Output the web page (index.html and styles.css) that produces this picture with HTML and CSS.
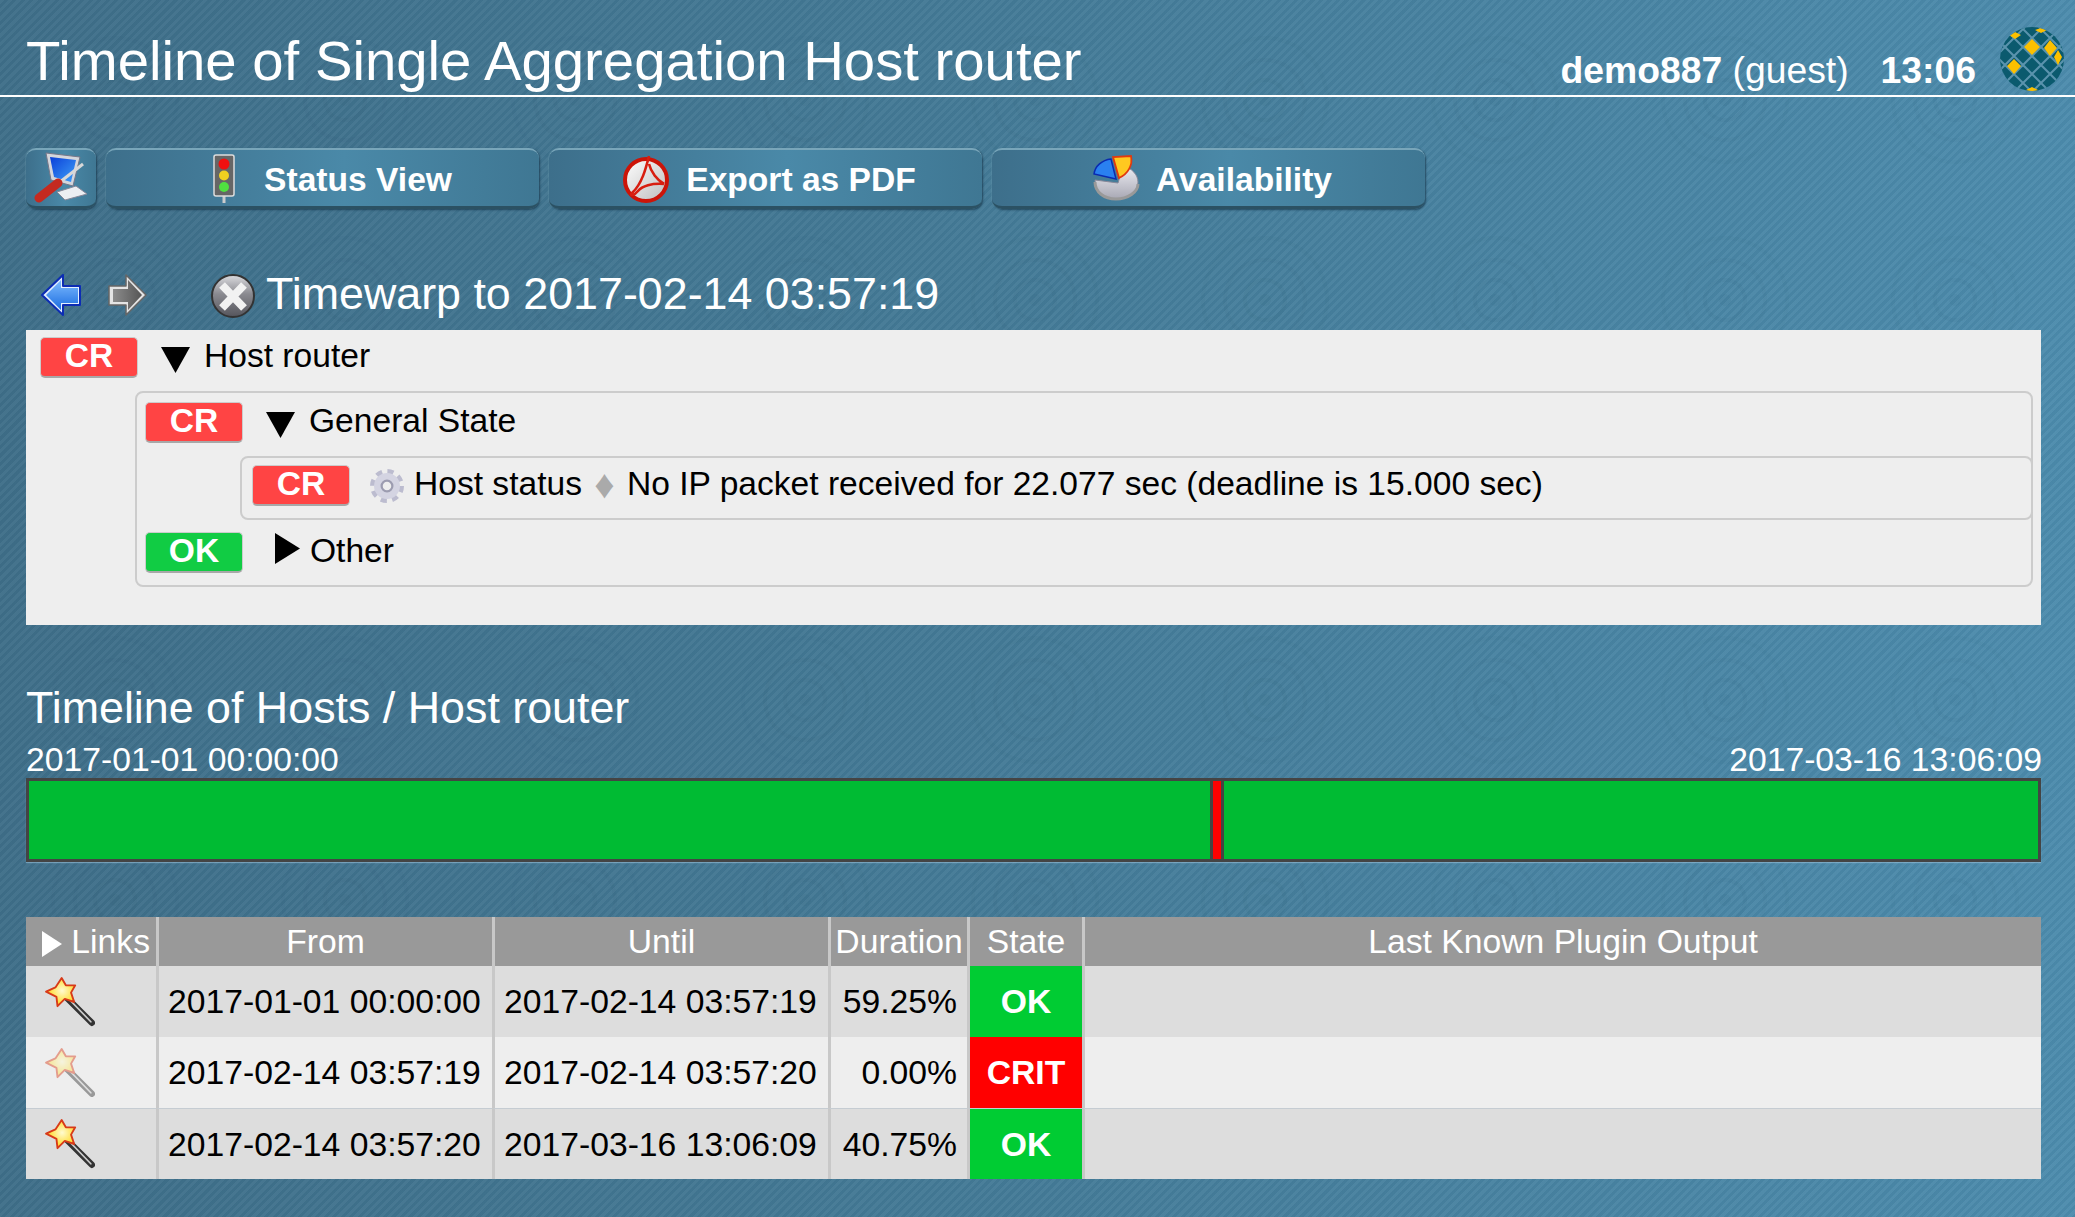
FILE: index.html
```html
<!DOCTYPE html>
<html lang="en">
<head>
    <meta charset="UTF-8">
    <title>Timeline of Single Aggregation Host router</title>
    <link rel="stylesheet" href="styles.css">
</head>
<body>
    <svg class="defs" aria-hidden="true">
        <defs>
            <linearGradient id="blueArrow" x1="0" y1="0" x2="0" y2="1"><stop offset="0" stop-color="#7fbcff"/><stop offset="1" stop-color="#1a6ce0"/></linearGradient>
            <linearGradient id="greyArrow" x1="0" y1="0" x2="1" y2="0"><stop offset="0" stop-color="#8c8c8c"/><stop offset="1" stop-color="#555"/></linearGradient>
            <linearGradient id="closeDisc" x1="0" y1="0" x2="0" y2="1"><stop offset="0" stop-color="#dcdce0"/><stop offset=".45" stop-color="#8a8a90"/><stop offset="1" stop-color="#55555c"/></linearGradient>
            <linearGradient id="screen" x1="0" y1="0" x2="1" y2="1"><stop offset="0" stop-color="#0a3fd8"/><stop offset="1" stop-color="#3fa0f8"/></linearGradient>
            <linearGradient id="pdfDisc" x1="0" y1="0" x2="1" y2="1"><stop offset="0" stop-color="#fff"/><stop offset="1" stop-color="#bdbdbd"/></linearGradient>
            <linearGradient id="pieBody" x1="0" y1="0" x2="0" y2="1"><stop offset="0" stop-color="#eeeef4"/><stop offset="1" stop-color="#a8a8b4"/></linearGradient>
            <radialGradient id="starFill" cx=".55" cy=".45" r=".65"><stop offset="0" stop-color="#fffbd0"/><stop offset=".65" stop-color="#ffdf40"/><stop offset="1" stop-color="#f8b010"/></radialGradient>
            <symbol id="wand" viewBox="0 0 48 48">
                <path d="M18 17 45 44" stroke="#333" stroke-width="6" stroke-linecap="round"/>
                <path d="M18 16 44 43" stroke="#ccc" stroke-width="1.6" stroke-linecap="round"/>
                <path d="M16 1 20 8 29 8 25 15 28 24 19 21 12 28 11 19 1 14 10 10Z" fill="url(#starFill)" stroke="#d83a18" stroke-width="1.8" stroke-linejoin="round"/>
            </symbol>
        </defs>
    </svg>

    <header class="top">
        <h1>Timeline of Single Aggregation Host router</h1>
        <div class="top-right">
            <div class="user"><b>demo887</b> (guest)</div>
            <div class="clock">13:06</div>
            <svg class="logo" viewBox="0 0 64 64">
                <clipPath id="ball"><circle cx="32" cy="32" r="32"/></clipPath>
                <g clip-path="url(#ball)">
                    <rect width="64" height="64" fill="#0b5a6e"/>
                    <path d="M17 -10-10 17M35 -10-10 35M53 -10-10 53M71 -10-10 71M89 -10-10 89M107 -10-10 107M125 -10-10 125M-61 -10 23 74M-43 -10 41 74M-25 -10 59 74M-7 -10 77 74M11 -10 95 74M29 -10 113 74M47 -10 131 74" stroke="#5a93ad" stroke-width="2" fill="none"/>
                    <path d="M32 12 40 20 32 28 24 20ZM50 13 57 21 50 29 44 21ZM58 23 62 30 58 38 54 30ZM14 32 21 39 14 47 7 39ZM15 5 21 8 15 12 9 8ZM41 1 47 3 41 6 35 3ZM32 60 38 63 32 66 26 63Z" fill="#fcc000"/>
                </g>
            </svg>
        </div>
    </header>

    <main class="page">
        <nav class="buttons">
            <a class="btn btn-icon">
                <svg width="54" height="52" viewBox="0 0 54 52">
                    <path d="M12 1 46 5 39 34 17 28Z" fill="#d4d6dc" stroke="#778" stroke-width="1"/>
                    <path d="M16 5 42 8 37 30 20 25Z" fill="url(#screen)"/>
                    <path d="M23 40 42 34 53 42 31 48Z" fill="#eceef2" stroke="#889" stroke-width="1"/>
                    <path d="M26 30 49 12" stroke="#d8d8d8" stroke-width="3"/>
                    <path d="M5 46 24 31" stroke="#c42a20" stroke-width="9" stroke-linecap="round"/>
                </svg>
            </a>
            <a class="btn">
                <svg class="btn-img" width="48" height="50" viewBox="0 0 48 50">
                    <rect x="22.500" y="40" width="3" height="9" fill="#ccc"/>
                    <rect x="14" y="1" width="20" height="41" rx="2" fill="#666" stroke="#ddd" stroke-width="1.500"/>
                    <circle cx="24" cy="10" r="5.500" fill="#f01010"/>
                    <circle cx="24" cy="21.500" r="5" fill="#f0d020"/>
                    <circle cx="24" cy="33" r="5" fill="#50e040"/>
                </svg>
                <span class="btn-text">Status View</span>
            </a>
            <a class="btn">
                <svg class="btn-img" width="48" height="50" viewBox="0 0 48 50">
                    <circle cx="24" cy="26" r="21" fill="url(#pdfDisc)" stroke="#cc1408" stroke-width="4"/>
                    <path d="M27 2C24 14 20 30 10 39 7 42 12 42 16 37 20 32 30 29 42 30M27 10C29 18 35 26 42 30" fill="none" stroke="#d81e10" stroke-width="2.600"/>
                </svg>
                <span class="btn-text">Export as PDF</span>
            </a>
            <a class="btn">
                <svg class="btn-img" width="48" height="50" viewBox="0 0 48 50">
                    <path d="M3 26C3 38 12 45 24 45S46 38 46 28C46 21 40 14 31 12L26 29Z" fill="url(#pieBody)" stroke="#889" stroke-width="1"/>
                    <path d="M3 28C3 38 12 45 24 45S46 38 46 30" fill="none" stroke="#999" stroke-width="3"/>
                    <path d="M24 25 2 20C3 12 10 6 19 5Z" fill="#2a80f0" stroke="#0a2ab0" stroke-width="1.500"/>
                    <path d="M27 24 21 3 39 2C41 11 36 20 27 24Z" fill="#ffc820" stroke="#e03a10" stroke-width="1.800"/>
                </svg>
                <span class="btn-text">Availability</span>
            </a>
        </nav>

        <div class="timewarp">
            <svg class="nav-back" width="40" height="42" viewBox="0 0 40 42">
                <path d="M1 21 22 1V12H39V31H22V41Z" fill="#e4f0ff" stroke="#0c2cb4" stroke-width="2" stroke-linejoin="round"/>
                <path d="M5 21 20 6V14H37V29H20V36Z" fill="url(#blueArrow)"/>
            </svg>
            <svg class="nav-next" width="40" height="42" viewBox="0 0 40 42">
                <path d="M38 21 18 1V12H1V31H18V41Z" fill="#e4e4e4" stroke="#666" stroke-width="1.500" stroke-linejoin="round"/>
                <path d="M34 21 20 6V15H5V28H20V36Z" fill="url(#greyArrow)"/>
            </svg>
            <svg class="nav-close" width="44" height="44" viewBox="0 0 44 44">
                <circle cx="22" cy="22" r="21" fill="url(#closeDisc)" stroke="#333" stroke-width="2"/>
                <path d="M11 11 33 34M33 11 11 34" stroke="#f2f2f2" stroke-width="8"/>
            </svg>
            <h2>Timewarp to 2017-02-14 03:57:19</h2>
        </div>

        <section class="tree">
            <div class="tree-row">
                <span class="badge crit">CR</span>
                <svg class="tri-down" width="29" height="26" viewBox="0 0 29 26"><path d="M0 0H29L14.500 26Z"/></svg>
                <span>Host router</span>
            </div>
            <div class="group">
                <div class="tree-row">
                    <span class="badge crit">CR</span>
                    <svg class="tri-down" width="29" height="26" viewBox="0 0 29 26"><path d="M0 0H29L14.500 26Z"/></svg>
                    <span>General State</span>
                </div>
                <div class="leaf">
                    <div class="tree-row">
                        <span class="badge crit">CR</span>
                        <svg class="gear" width="38" height="34" viewBox="0 0 38 38">
                            <circle cx="19" cy="19" r="15.500" fill="none" stroke="#bcbccf" stroke-width="7" stroke-dasharray="6.500 5.670"/>
                            <circle cx="19" cy="19" r="10.500" fill="none" stroke="#d4d4e2" stroke-width="8"/>
                            <circle cx="19" cy="19" r="6" fill="none" stroke="#9c9cb0" stroke-width="2.500"/>
                        </svg>
                        <span>Host status</span>
                        <span class="sep">&#9830;</span>
                        <span>No IP packet received for 22.077 sec (deadline is 15.000 sec)</span>
                    </div>
                </div>
                <div class="tree-row">
                    <span class="badge ok">OK</span>
                    <svg class="tri-right" width="25" height="31" viewBox="0 0 25 31"><path d="M0 0 25 15.500 0 31Z"/></svg>
                    <span>Other</span>
                </div>
            </div>
        </section>

        <h2 class="bar-title">Timeline of Hosts / Host router</h2>
        <div class="bar-dates">
            <span>2017-01-01 00:00:00</span>
            <span>2017-03-16 13:06:09</span>
        </div>
        <div class="bar">
            <div class="seg seg-ok" style="width: 58.8%"></div>
            <div class="seg seg-crit"></div>
            <div class="seg seg-ok seg-rest"></div>
        </div>

        <table class="timeline">
            <colgroup>
                <col class="col-links">
                <col class="col-date">
                <col class="col-date">
                <col class="col-dur">
                <col class="col-state">
                <col>
            </colgroup>
            <thead>
                <tr>
                    <th class="links-head"><svg class="tri-white" width="20" height="26" viewBox="0 0 20 26"><path d="M0 0 20 13 0 26Z"/></svg> Links</th>
                    <th>From</th>
                    <th>Until</th>
                    <th>Duration</th>
                    <th>State</th>
                    <th>Last Known Plugin Output</th>
                </tr>
            </thead>
            <tbody>
                <tr class="even">
                    <td class="links"><svg class="wand" width="50" height="50"><use href="#wand"/></svg></td>
                    <td>2017-01-01 00:00:00</td>
                    <td>2017-02-14 03:57:19</td>
                    <td class="num">59.25%</td>
                    <td class="state state-ok">OK</td>
                    <td></td>
                </tr>
                <tr class="odd">
                    <td class="links"><svg class="wand wand-off" width="50" height="50"><use href="#wand"/></svg></td>
                    <td>2017-02-14 03:57:19</td>
                    <td>2017-02-14 03:57:20</td>
                    <td class="num">0.00%</td>
                    <td class="state state-crit">CRIT</td>
                    <td></td>
                </tr>
                <tr class="even">
                    <td class="links"><svg class="wand" width="50" height="50"><use href="#wand"/></svg></td>
                    <td>2017-02-14 03:57:20</td>
                    <td>2017-03-16 13:06:09</td>
                    <td class="num">40.75%</td>
                    <td class="state state-ok">OK</td>
                    <td></td>
                </tr>
            </tbody>
        </table>
    </main>
</body>
</html>
```

FILE: styles.css
```css
html, body {
    margin: 0;
    padding: 0;
}
body {
    min-height: 100vh;
    font-family: "Liberation Sans", Arial, sans-serif;
    font-size: 33.7px;
    color: #fff;
    background-color: #477f9c;
    background-image:
        repeating-linear-gradient(135deg, rgba(255, 255, 255, 0.03) 0 3px, rgba(0, 30, 50, 0.04) 3px 6px),
        radial-gradient(circle at 50% 50%, rgba(0, 40, 60, 0.035) 0 6px, transparent 6px 18px, rgba(0, 40, 60, 0.035) 18px 22px, transparent 22px 38px, rgba(0, 40, 60, 0.03) 38px 42px, transparent 42px 60px, rgba(0, 40, 60, 0.025) 60px 64px, transparent 64px),
        linear-gradient(90deg, #3f6f89 0%, #447a96 45%, #4d8cad 100%);
    background-size: auto, 230px 200px, auto;
}
.defs {
    display: block;
    width: 0;
    height: 0;
}
svg {
    flex: none;
}

/* Cabecera */
.top {
    display: flex;
    justify-content: space-between;
    height: 95px;
    border-bottom: 2px solid #fff;
}
h1 {
    margin: 0;
    padding: 31px 0 0 26px;
    font-size: 56.3px;
    line-height: 60px;
    font-weight: normal;
}
.top-right {
    display: flex;
    align-items: flex-start;
    padding-right: 11px;
}
.user, .clock {
    margin-top: 50px;
    font-size: 37.3px;
    line-height: 40px;
}
.clock {
    margin-left: 32px;
    font-weight: bold;
}
.logo {
    width: 64px;
    height: 64px;
    margin: 27px 0 0 24px;
}

.page {
    padding: 0 34px 0 26px;
}

/* Botones */
.buttons {
    display: flex;
    gap: 10px;
    margin-top: 51px;
}
.btn {
    box-sizing: border-box;
    display: flex;
    align-items: center;
    justify-content: center;
    gap: 16px;
    width: 433px;
    height: 61px;
    padding: 2px 0 0 7px;
    font-size: 33.6px;
    font-weight: bold;
    border-top: 2px solid #79a6ba;
    border-bottom: 3px solid #2b5163;
    border-radius: 10px;
    background: linear-gradient(90deg, #3d6f8b 0%, #4a89a8 55%, #3f7793 100%);
    box-shadow: 1px 1px 2px rgba(20, 50, 70, 0.7), -1px 0 1px rgba(120, 170, 190, 0.3);
}
.btn-icon {
    width: 70px;
    padding: 0;
}
.btn-text {
    padding-top: 2px;
}

/* Timewarp */
.timewarp {
    display: flex;
    align-items: flex-start;
    height: 62px;
    margin-top: 59px;
}
.timewarp h2 {
    margin: 0 0 0 11px;
}
h2 {
    font-size: 44.8px;
    line-height: 50px;
    font-weight: normal;
}
.nav-back, .nav-next, .nav-close {
    margin-top: 6px;
}
.nav-back {
    margin-left: 15px;
}
.nav-next {
    margin-left: 27px;
}
.nav-close {
    margin-left: 63px;
}

/* Arbol de estados */
.tree {
    box-sizing: border-box;
    height: 295px;
    padding: 7px 8px 0 14px;
    font-size: 33.6px;
    color: #000;
    background-color: #eee;
}
.tree-row {
    display: flex;
    align-items: center;
    height: 38px;
    margin-bottom: 2px;
    white-space: nowrap;
}
.badge {
    box-sizing: border-box;
    flex: none;
    align-self: flex-start;
    width: 98px;
    height: 41px;
    line-height: 36px;
    text-align: center;
    font-weight: bold;
    color: #fff;
    border-radius: 5px;
    border: 1px solid #ccc;
    border-bottom: 2px solid #a8a8a8;
}
.crit {
    background-color: #f44;
}
.ok {
    background-color: #1c4;
}
.tri-down {
    margin: 8px 14px 0 23px;
}
.tri-right {
    margin: -6px 10px 0 32px;
}
.group {
    margin: 16px 0 0 95px;
    padding: 9px 0 13px 8px;
    border: 2px solid #ccc;
    border-radius: 8px;
}
.leaf {
    box-sizing: border-box;
    height: 64px;
    margin: 16px -2px 12px 95px;
    padding: 7px 0 0 10px;
    border: 2px solid #ccc;
    border-radius: 8px;
}
.gear {
    margin: 4px 8px 0 18px;
}
.sep {
    width: 45px;
    height: 38px;
    line-height: 38px;
    text-align: center;
    color: #aaa;
    font-size: 40px;
}

/* Barra del timeline */
.bar-title {
    margin: 57px 0 0;
}
.bar-dates {
    display: flex;
    justify-content: space-between;
    height: 35px;
    margin-top: 9px;
    line-height: 36px;
}
.bar-dates span:last-child {
    margin-right: -1px;
}
.bar {
    box-sizing: border-box;
    display: flex;
    height: 84px;
    margin-top: 2px;
    border: 3px solid #444;
    box-shadow: 0 1px 1px rgba(150, 190, 215, 0.6);
}
.seg-ok {
    background-color: #0b3;
}
.seg-rest {
    flex: 1;
}
.seg-crit {
    box-sizing: border-box;
    flex: none;
    width: 14px;
    background-color: #f00;
    border-left: 3px solid #444;
    border-right: 3px solid #444;
}

/* Tabla */
.timeline {
    width: 2015px;
    margin-top: 55px;
    table-layout: fixed;
    border-collapse: separate;
    border-spacing: 0;
    color: #000;
}
.col-links {
    width: 130px;
}
.col-date {
    width: 336px;
}
.col-dur {
    width: 139px;
}
.col-state {
    width: 115px;
}
th, td {
    box-sizing: border-box;
    padding: 0;
    border-left: 3px solid #c8c8c8;
    white-space: nowrap;
}
th:first-child, td:first-child {
    border-left: none;
}
th {
    height: 49px;
    font-weight: normal;
    color: #fff;
    background-color: #999;
}
td {
    height: 71px;
    padding-left: 9px;
}
.links-head {
    text-align: left;
    padding-left: 16px;
}
.tri-white {
    fill: #fff;
    vertical-align: -4px;
}
td.links {
    padding-left: 19px;
}
.wand {
    display: block;
}
.wand-off {
    opacity: 0.45;
}
.even td {
    background-color: #ddd;
}
.odd td {
    background-color: #eee;
}
.even:last-child td {
    border-top: 1px solid #c5ccd2;
}
td.num {
    padding: 0 10px 0 0;
    text-align: right;
}
.even td.state-ok, .state-ok {
    background-color: #0c3;
}
.odd td.state-crit, .state-crit {
    background-color: #f00;
}
td.state {
    padding: 0;
    text-align: center;
    font-weight: bold;
    color: #fff;
}
```
